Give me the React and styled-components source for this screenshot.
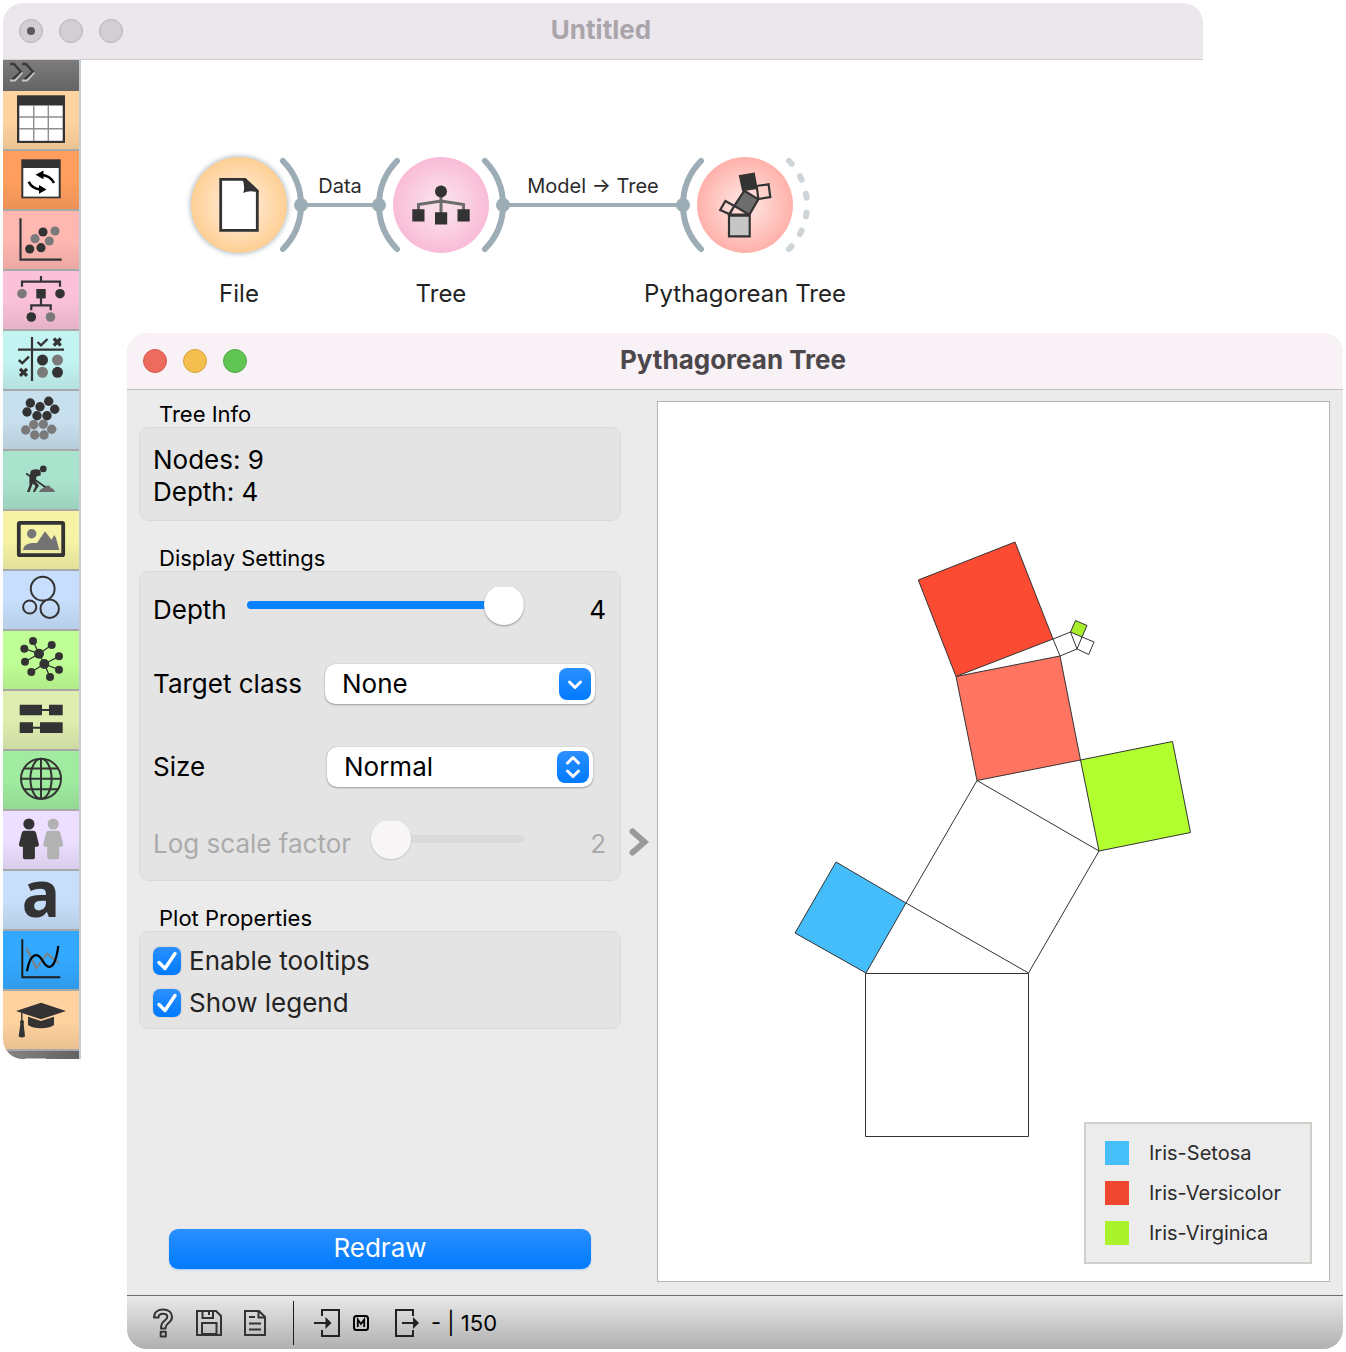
import React, { useState } from "react";
import styled, { createGlobalStyle, css } from "styled-components";

const INK = "#333333";
const GREY = "#7a7a7a";
const ANCHOR = "#9cadb6";

const GlobalStyle = createGlobalStyle`
  *, *::before, *::after { box-sizing: border-box; }
  body {
    margin: 0;
    background: #ffffff;
    color: #000000;
    font-family: Inter, "Liberation Sans", sans-serif;
  }
  button, select, input { font: inherit; color: inherit; margin: 0; }
  svg { display: block; }
`;

/* ---------- Desktop and windows ---------- */

const Desktop = styled.div`
  position: relative;
  height: 100vh;
  min-height: 1200px;
  overflow: hidden;
`;

const WorkflowWindow = styled.section`
  position: absolute;
  top: 3px;
  left: 3px;
  right: 143px;
  display: flex;
  flex-direction: column;
  overflow: hidden;
  border-radius: 20px 20px 0 20px;
`;

const DialogWindow = styled.section`
  position: absolute;
  top: 333px;
  left: 127px;
  right: 3px;
  bottom: 3px;
  display: flex;
  flex-direction: column;
  overflow: hidden;
  border-radius: 20px;
  background: #ebebeb;
`;

const TitleBar = styled.header`
  display: grid;
  grid-template-columns: 1fr auto 1fr;
  align-items: center;
  flex: none;
  height: 57px;
  padding: 0 20px 0 16px;
  background: ${(p) => (p.$active ? "#f8f1f6" : "#ece7ec")};
  color: ${(p) => (p.$active ? "#4b474b" : "#aaa5aa")};
  border-bottom: 1px solid ${(p) => (p.$active ? "#c3bfc2" : "#d2ced2")};
`;

const Title = styled.h1`
  margin: 0;
  padding-bottom: 2px;
  font-size: 26px;
  line-height: 32px;
  font-weight: 700;
`;

const Lights = styled.div`
  display: flex;
  gap: 16px;
`;

const Light = styled.button`
  display: grid;
  place-items: center;
  width: 24px;
  height: 24px;
  padding: 0;
  border: 1px solid ${(p) => p.$edge};
  border-radius: 50%;
  background: ${(p) => p.$fill};
`;

const EditedDot = styled.span`
  width: 8px;
  height: 8px;
  border-radius: 50%;
  background: #5d585d;
`;

/* ---------- Category sidebar ---------- */

const Workspace = styled.div`
  display: flex;
`;

const Sidebar = styled.nav`
  display: flex;
  flex-direction: column;
  flex: none;
  width: 78px;
  height: 999px;
  overflow: hidden;
  border-right: 2px solid #c5ccd2;
`;

const ExpandButton = styled.button`
  display: flex;
  align-items: flex-start;
  flex: none;
  height: 31px;
  padding: 2px 0 0 6px;
  border: 0;
  background: linear-gradient(#7c7c7c, #646464);
`;

const Category = styled.button`
  flex: none;
  height: 60px;
  padding: 0;
  border: 0;
  border-bottom: 2px solid #a8a8a8;
  background: linear-gradient(rgba(0, 0, 0, 0) 50%, rgba(0, 0, 0, 0.08)) ${(p) => p.$color};
`;

const Letter = styled.span`
  display: block;
  padding-bottom: 14px;
  font-family: "Noto Sans", sans-serif;
  font-size: 64px;
  line-height: 44px;
  font-weight: 700;
  color: ${INK};
`;

const SidebarEnd = styled.div`
  flex: none;
  height: 8px;
  padding: 7px 0 0 22px;
  background: linear-gradient(90deg, #868686, #626262);

  &::after {
    content: "";
    display: block;
    width: 21px;
    height: 1px;
    background: #bdbdbd;
  }
`;

/* ---------- Workflow canvas ---------- */

const Canvas = styled.main`
  position: relative;
  flex: 1;
  background: #ffffff;
`;

const LinkLine = styled.div`
  position: absolute;
  left: ${(p) => p.$from}px;
  top: 120px;
  display: flex;
  flex-direction: column;
  align-items: center;
  gap: 11px;
  width: ${(p) => p.$to - p.$from}px;
  font-size: 20px;
  line-height: 12px;
  color: #2b2b2b;
  white-space: nowrap;

  &::after {
    content: "";
    width: 100%;
    height: 4px;
    background: ${ANCHOR};
  }
`;

const NodeBox = styled.figure`
  position: absolute;
  left: ${(p) => p.$x - 110}px;
  top: 93px;
  display: flex;
  flex-direction: column;
  align-items: center;
  gap: 21px;
  width: 220px;
  margin: 0;
`;

const NodeName = styled.figcaption`
  font-size: 24px;
  line-height: 32px;
  color: #232323;
  white-space: nowrap;
`;

/* ---------- Dialog body ---------- */

const DialogBody = styled.div`
  display: flex;
  flex: 1;
  min-height: 0;
  padding: 11px 13px 13px 12px;
`;

const Controls = styled.div`
  display: flex;
  flex-direction: column;
  gap: 24px;
  flex: none;
  width: 482px;
`;

const Group = styled.fieldset`
  min-width: 0;
  margin: 0;
  padding: 0;
  border: 0;
`;

const GroupTitle = styled.legend`
  padding: 0 20px;
  font-size: 22px;
  line-height: 26px;
`;

const GroupPanel = styled.div`
  padding: ${(p) => p.$padding};
  border: 1px solid #d9d9d9;
  border-radius: 10px;
  background: #e4e4e4;
  font-size: 26px;
  line-height: 32px;
`;

const InfoLine = styled.p`
  margin: 0;
`;

const SettingsGrid = styled.div`
  display: grid;
  grid-template-rows: 76px 72px 94px 60px;
`;

const SettingRow = styled.div`
  display: flex;
  align-items: center;
  gap: 20px;
  color: ${(p) => (p.$disabled ? "#ababab" : "#000000")};
`;

const SettingLabel = styled.label`
  flex: none;
`;

const SettingValue = styled.output`
  flex: none;
  width: 62px;
  text-align: right;
`;

const thumb = css`
  appearance: none;
  width: 40px;
  height: 40px;
  margin-top: -16px;
  border: 0;
  border-radius: 50%;
  background: ${(p) => (p.disabled ? "#f8f6f7" : "#ffffff")};
  box-shadow: 0 1px 2px rgba(0, 0, 0, ${(p) => (p.disabled ? 0.15 : 0.35)});
`;

const Slider = styled.input`
  appearance: none;
  flex: 1;
  min-width: 0;
  height: 40px;
  margin-bottom: 10px;
  background: transparent;
  clip-path: inset(2px -4px -4px -4px);

  &::-webkit-slider-runnable-track {
    height: 8px;
    border-radius: 4px;
    background: ${(p) => (p.disabled ? "#dadada" : "#0a82ff")};
  }
  &::-webkit-slider-thumb { ${thumb} }
`;

const SelectBox = styled.div`
  display: grid;
  align-items: center;
  width: ${(p) => p.$width}px;
  margin: 0 ${(p) => p.$inset}px 0 auto;
`;

const Select = styled.select`
  grid-area: 1 / 1;
  appearance: none;
  width: 100%;
  height: 40px;
  padding: 0 44px 0 17px;
  border: 0;
  border-radius: 10px;
  background: #ffffff;
  box-shadow: 0 0 1px rgba(0, 0, 0, 0.3), 0 1px 2px rgba(0, 0, 0, 0.3);
`;

const SelectBadge = styled.span`
  grid-area: 1 / 1;
  justify-self: end;
  width: 32px;
  height: 32px;
  margin-right: 4px;
  border-radius: 8px;
  background: linear-gradient(#2b90ff, #007aff);
  pointer-events: none;
`;

const CheckRow = styled.label`
  display: flex;
  align-items: center;
  gap: 8px;
  height: 42px;
  color: #232323;
`;

const CheckCell = styled.span`
  display: grid;
  width: 28px;
  height: 28px;

  > * { grid-area: 1 / 1; }
  > svg { pointer-events: none; }
  > input:not(:checked) + svg { visibility: hidden; }
`;

const CheckInput = styled.input`
  appearance: none;
  width: 28px;
  height: 28px;
  border-radius: 7px;
  background: #ffffff;
  box-shadow: 0 0 2px rgba(0, 0, 0, 0.2);

  &:checked { background: linear-gradient(#2b90ff, #007aff); }
`;

const RedrawButton = styled.button`
  height: 40px;
  margin: auto 30px 13px;
  padding: 0 0 2px;
  border: 0;
  border-radius: 9px;
  background: linear-gradient(#2b90ff, #007aff);
  box-shadow: 0 1px 2px rgba(0, 122, 255, 0.3);
  color: #ffffff;
  font-size: 26px;
  line-height: 32px;
`;

const SplitHandle = styled.button`
  display: grid;
  place-items: center;
  flex: none;
  width: 36px;
  padding: 0;
  border: 0;
  background: transparent;
`;

const Plot = styled.div`
  position: relative;
  flex: 1;
  min-width: 0;
  border: 1px solid #b4b4b4;
  background: #ffffff;
`;

const Legend = styled.ul`
  position: absolute;
  right: 17px;
  bottom: 17px;
  min-width: 228px;
  margin: 0;
  padding: 9px 18px 9px 19px;
  border: 2px solid #cfcfca;
  background: #ececec;
  list-style: none;
`;

const LegendItem = styled.li`
  display: flex;
  align-items: center;
  gap: 20px;
  height: 40px;
  font-size: 20px;
  line-height: 24px;
  color: #2b2b2b;

  &::before {
    content: "";
    width: 24px;
    height: 24px;
    background: ${(p) => p.$color};
  }
`;

/* ---------- Status bar ---------- */

const StatusBar = styled.footer`
  display: flex;
  align-items: center;
  flex: none;
  height: 54px;
  padding: 0 24px;
  border-top: 1px solid #6e6e6e;
  background: linear-gradient(#e9e9e9, #b0b0b0);
  font-size: 22px;
  line-height: 28px;
`;

const StatusGroup = styled.div`
  display: flex;
  align-items: center;
  gap: ${(p) => p.$gap}px;
`;

const StatusButton = styled.button`
  padding: 0;
  border: 0;
  background: transparent;
`;

const StatusDivider = styled.span`
  width: 1px;
  height: 44px;
  margin: 0 20px 0 27px;
  background: #1c1c1c;
`;

/* ---------- Category icons, drawn on a 76 x 58 tile ---------- */

const dots = (list, r, fill) =>
  list.map(([x, y]) => <circle key={`${x},${y}`} cx={x} cy={y} r={r} fill={fill} />);

const Person = ({ x, fill }) => (
  <g transform={`translate(${x} 0)`} fill={fill}>
    <circle cx="0" cy="13" r="5.6" />
    <path d="M-4.5 19.7H4.5Q6.5 19.7 7.2 22L10 33.5Q10 35.5 8.5 35.7H6V46.5Q6 48.3 4 48.3H-4Q-6 48.3-6 46.5V35.7H-8.5Q-10 35.5-10 33.5L-7.2 22Q-6.5 19.7-4.5 19.7Z" />
  </g>
);

const categories = [
  ["Data", "#ffd39f", (
    <>
      <rect x="14" y="4.3" width="48" height="47.7" fill={INK} />
      <rect x="16.3" y="14.5" width="43.4" height="35.3" fill="#fff" />
      <path d="M30.7 14.5V50M45.3 14.5V50M16 26H60M16 37.7H60" stroke="#8f8f8f" strokeWidth="1.4" />
    </>
  )],
  ["Transform", "#ff9e5e", (
    <>
      <rect x="18.3" y="8.3" width="39.4" height="39" fill={INK} />
      <rect x="20.3" y="17" width="35.4" height="28.6" fill="#fff" />
      <path d="M51 32Q47 24.5 39 24M25.7 30.7Q29 37.5 37 38.4" fill="none" stroke="#000" strokeWidth="2.6" />
      <path d="M32.5 23.7L40.5 19.5V28.2ZM43.5 38.4L36 34V42.8Z" fill="#000" />
    </>
  )],
  ["Visualize", "#ffb7b1", (
    <>
      <path d="M17.5 7.3V48.7H58.7" fill="none" stroke={INK} strokeWidth="2.2" />
      {dots([[52, 20], [32, 27.7], [46.3, 30]], 4.6, GREY)}
      {dots([[40, 21], [26.7, 38], [38, 36.7]], 4.6, INK)}
    </>
  )],
  ["Model", "#fac1d9", (
    <>
      <path d="M19 15.7V10.7H57V15.7M38 5V10.7M38 27V34.3M28.3 39.3V34.3H47.7V39.3" fill="none" stroke={INK} strokeWidth="2.2" />
      <rect x="33.3" y="18" width="9.4" height="9.4" fill={INK} />
      {dots([[57, 22.7], [28.3, 46]], 4.8, INK)}
      {dots([[19, 22.7], [47.5, 46]], 4.8, GREY)}
    </>
  )],
  ["Evaluate", "#c4f4f2", (
    <>
      <path d="M29 6V50M15 18.7H61" stroke={INK} strokeWidth="2.2" />
      <path d="M34.5 11L38 14.3L44.5 8M15.7 29L19.3 32.2L26 25.7" fill="none" stroke={INK} strokeWidth="2.4" />
      <path d="M50.8 7.5L57.8 14.5M57.8 7.5L50.8 14.5M17 37.8L24 44.8M24 37.8L17 44.8" stroke={INK} strokeWidth="3.2" />
      {dots([[39.5, 29], [54.5, 41.3]], 5.5, INK)}
      {dots([[54.5, 29], [39.5, 41.3]], 5.5, GREY)}
    </>
  )],
  ["Unsupervised", "#c8dfee", (
    <>
      {dots([[30.7, 33.7], [40.3, 33.3], [22.7, 39], [48.7, 38.3], [31.7, 44], [41, 44]], 4.7, GREY)}
      {dots([[27.3, 12], [37, 15.7], [45.7, 10.3], [24, 21], [51.7, 18.3], [34, 24.7], [44, 24.7]], 4.7, INK)}
    </>
  )],
  ["Prototypes", "#aae3cd", (
    <>
      <path d="M36 41Q37.5 37.5 40.5 37Q41.5 34.5 44.5 34.5Q47.5 34.5 48 37Q51 37.5 52 41Z" fill="#6b6b6b" />
      <circle cx="40.3" cy="17.9" r="3.3" fill={INK} />
      <path d="M28 19.5Q32 17.5 36.5 18.8Q38.5 20.5 37.5 24.5L33.5 25.5L32.5 30.5L36 34.5L31.8 41H29.8L32.5 35L29.8 32.5L26.5 41H24L26.5 34Q25.8 25 28 19.5Z" fill={INK} />
      <path d="M23.2 22.5L42.5 36.2" stroke={INK} strokeWidth="1.7" />
    </>
  )],
  ["Image Analytics", "#f6f3a6", (
    <>
      <rect x="15.8" y="11.8" width="44.4" height="32.4" rx="1" fill="none" stroke={INK} strokeWidth="3.8" />
      <circle cx="28.7" cy="22.8" r="4.7" fill="#777" />
      <path d="M20 39Q21 32.5 29 32H34L42 20.2L48.5 28.8L51.3 24L53 27L56.3 39Z" fill="#737373" />
    </>
  )],
  ["Networks", "#c7dffc", (
    <g fill="none" stroke={INK} strokeWidth="2">
      <circle cx="39.7" cy="17.7" r="11.9" />
      <circle cx="26.7" cy="36" r="6.6" />
      <circle cx="46.7" cy="37.7" r="9.2" />
    </g>
  )],
  ["Network", "#c0ff96", (
    <>
      <path d="M36 22.7L30 10M36 22.7L48.7 14M36 22.7L21.3 17.7M36 22.7L22 30.7M36 22.7L41.3 33M41.3 33L56 25.3M41.3 33L56 38.7M41.3 33L28.3 41M41.3 33L47 46" stroke={INK} strokeWidth="1.3" />
      {dots([[36, 22.7], [41.3, 33]], 5, INK)}
      {dots([[30, 10], [48.7, 14], [21.3, 17.7], [56, 25.3], [22, 30.7], [56, 38.7], [28.3, 41], [47, 46]], 4, INK)}
    </>
  )],
  ["Time blocks", "#dfedb0", (
    <path d="M16.7 13.7H39V18H46V13.7H59.7V24.3H46V20H39V24.3H16.7ZM16.7 31.3H30V35.7H37V31.3H59.7V42H37V37.7H30V42H16.7Z" fill={INK} />
  )],
  ["Geo", "#a0eba0", (
    <g fill="none" stroke={INK} strokeWidth="2">
      <circle cx="38" cy="27.8" r="20" />
      <ellipse cx="38" cy="27.8" rx="10.6" ry="20" />
      <path d="M38 8V48M18 27.8H58M21 17.6H55M21 38.2H55" />
    </g>
  )],
  ["Fairness", "#ecdfff", (
    <>
      <Person x={25.9} fill={INK} />
      <Person x={50.2} fill="#b2b2b2" />
    </>
  )],
  ["Text Mining", "#c7dffa", "a"],
  ["Time Series", "#33a8ff", (
    <g fill="none">
      <path d="M23.3 17L33.3 37L44 22.7L56 32.3" stroke="#7f7f7f" strokeWidth="2" />
      <path d="M19.3 8.3V46.3H57.3" stroke="#1d1d1d" strokeWidth="2" />
      <path d="M24 40.3C27 22 34.5 20.5 39.5 29.5C44 37.5 51.5 42.5 55.3 15" stroke="#000" strokeWidth="2.2" />
    </g>
  )],
  ["Educational", "#ffd29f", (
    <>
      <path d="M13 20L38 11.7L63 20L38 28.3Z" fill={INK} />
      <path d="M25 25.7L38 30L51 25.7V34Q46 37.2 38 37.2Q30 37.2 25 34Z" fill={INK} />
      <path d="M18.8 21.5V31" stroke={INK} strokeWidth="1.4" />
      <circle cx="19" cy="31" r="2" fill={INK} />
      <path d="M17.5 31.5H20.5L22 45.5Q19 47.5 15.7 45.5Z" fill={INK} />
    </>
  )],
];

/* ---------- Workflow nodes ---------- */

const RIGHT_ARC = "M44 -44A62.8 62.8 0 0 1 44 44";
const LEFT_ARC = "M-44 -44A62.8 62.8 0 0 0 -44 44";

function WorkflowNode({ x, name, id, inner, outer, input, output, selected, children }) {
  return (
    <NodeBox $x={x}>
      <svg width="140" height="104" viewBox="-70 -52 140 104" overflow="visible" aria-hidden="true">
        <defs>
          <radialGradient id={id}>
            <stop offset="0.3" stopColor={inner} />
            <stop offset="1" stopColor={outer} />
          </radialGradient>
          <filter id={`${id}-glow`} x="-20%" y="-20%" width="140%" height="140%">
            <feGaussianBlur stdDeviation="2.5" />
          </filter>
        </defs>
        {selected && <circle r="49" fill={ANCHOR} filter={`url(#${id}-glow)`} opacity="0.8" />}
        <circle r="48" fill={`url(#${id})`} />
        <g fill="none" stroke={ANCHOR} strokeWidth="6" strokeLinecap="round">
          {input && <path d={LEFT_ARC} />}
          {output === "linked" && <path d={RIGHT_ARC} />}
          {output === "free" && <path d={RIGHT_ARC} stroke="#cdd5d9" strokeDasharray="4 14.7" />}
        </g>
        {input && <circle cx="-62" r="7" fill={ANCHOR} />}
        {output === "linked" && <circle cx="62" r="7" fill={ANCHOR} />}
        {children}
      </svg>
      <NodeName>{name}</NodeName>
    </NodeBox>
  );
}

/* ---------- Pythagorean tree ---------- */

const squares = [
  ["865.5,973.5 1028.5,973.5 1028.5,1136.5 865.5,1136.5", "none"],
  ["866,973 906,903 836,862 795,933", "#46bdfb"],
  ["906,903 977,780.5 1099,851 1028.5,973", "none"],
  ["977,780.5 956,676.5 1060,656 1080.5,760", "#ff7562"],
  ["1080.5,760 1172.5,741.5 1190.5,832.5 1099,851", "#b2ff2f"],
  ["956,676.5 918.3,580 1015,542 1053,639", "#fb4b32"],
  ["1053,639 1070.5,632 1077,649 1060,656", "none"],
  ["1070.5,632 1075.5,620.5 1087,625.5 1082,637", "#a8ee2c"],
  ["1077,649 1082,637 1094,642 1088.7,654.5", "none"],
];

function Chevron({ double }) {
  return (
    <svg width="32" height="32" viewBox="0 0 32 32" aria-hidden="true" fill="none" stroke="#fff" strokeWidth="3" strokeLinecap="round" strokeLinejoin="round">
      <path d={double ? "M10.5 12L16 6.5L21.5 12M10.5 20L16 25.5L21.5 20" : "M10.5 14L16 19.5L21.5 14"} />
    </svg>
  );
}

function Check({ label, defaultChecked }) {
  return (
    <CheckRow>
      <CheckCell>
        <CheckInput type="checkbox" defaultChecked={defaultChecked} />
        <svg width="28" height="28" viewBox="0 0 28 28" aria-hidden="true">
          <path d="M6 15.5L12 21.5L22 6.5" fill="none" stroke="#fff" strokeWidth="3.4" strokeLinecap="round" strokeLinejoin="round" />
        </svg>
      </CheckCell>
      {label}
    </CheckRow>
  );
}

export default function App() {
  const [depth, setDepth] = useState(4);

  return (
    <Desktop>
      <GlobalStyle />
      <WorkflowWindow>
        <TitleBar>
          <Lights>
            <Light aria-label="Close" $fill="#d3ced3" $edge="#b6b1b6"><EditedDot /></Light>
            <Light aria-label="Minimize" $fill="#d3ced3" $edge="#b6b1b6" />
            <Light aria-label="Zoom" $fill="#d3ced3" $edge="#b6b1b6" />
          </Lights>
          <Title>Untitled</Title>
        </TitleBar>
        <Workspace>
          <Sidebar aria-label="Widget categories">
            <ExpandButton aria-label="Expand">
              <svg width="28" height="20" viewBox="0 0 28 20" fill="none" strokeWidth="2.4">
                <path d="M1 2H5L12 10L3 18M13 2H17L24 10L15 18" stroke="#3a3a3a" />
                <path d="M1 18.5H6L13.5 10.5M13 18.5H18L25.5 10.5" stroke="#c8c8c8" strokeWidth="1.8" />
              </svg>
            </ExpandButton>
            {categories.map(([name, color, icon]) => (
              <Category key={name} aria-label={name} $color={color}>
                {typeof icon === "string" ? (
                  <Letter>{icon}</Letter>
                ) : (
                  <svg width="76" height="58" viewBox="0 0 76 58" aria-hidden="true">{icon}</svg>
                )}
              </Category>
            ))}
            <SidebarEnd />
          </Sidebar>
          <Canvas>
            <LinkLine $from={220} $to={298}>Data</LinkLine>
            <LinkLine $from={422} $to={602}>Model → Tree</LinkLine>
            <WorkflowNode x={158} name="File" id="file" inner="#ffe7cc" outer="#ffcf94" output="linked" selected>
              <path d="M-18.3 -25.6H6L18.3 -14V25.3H-18.3Z" fill="#fff" stroke={INK} strokeWidth="2.8" />
              <path d="M3 -26.5H6.5L19.5 -14.5V-12.5Q10 -15 4.3 -12Q6.5 -19 3 -26.5Z" fill={INK} />
            </WorkflowNode>
            <WorkflowNode x={360} name="Tree" id="tree" inner="#fadbe8" outer="#fabbd7" input output="linked">
              <path d="M-22.5 6V-0.5L0 -4L22.5 -0.5V6M0 -8V9" fill="none" stroke="#6b6b6b" strokeWidth="3" />
              <circle cy="-13.6" r="6" fill={INK} />
              <path d="M-28.7 4.3H-16.5V16.5H-28.7ZM-6 7.3H6.2V19.5H-6ZM16.5 4.3H28.7V16.5H16.5Z" fill={INK} />
            </WorkflowNode>
            <WorkflowNode x={664} name="Pythagorean Tree" id="pyth" inner="#ffd9d5" outer="#ffb1aa" input output="free">
              <g stroke={INK} strokeWidth="2.2">
                <path d="M-16 10.6H4.7V31.4H-16Z" fill="#c6c6c6" />
                <path d="M-0.7 -14.3L13.3 -5.7L4.3 9.7L-10.7 1Z" fill="#6e6e6e" />
                <path d="M-5 -29L8.8 -31.2L11.5 -17L-2 -15Z" fill={INK} />
                <path d="M11.7 -19L23.6 -20.7L25.3 -8L13.3 -6ZM-19.6 -4L-10.7 1L-15.8 9L-24.8 4.9ZM-10.7 1L-15.5 9.7H4" fill="none" />
              </g>
            </WorkflowNode>
          </Canvas>
        </Workspace>
      </WorkflowWindow>

      <DialogWindow>
        <TitleBar $active>
          <Lights>
            <Light aria-label="Close" $fill="#ec6a5e" $edge="#d5574c" />
            <Light aria-label="Minimize" $fill="#f4bf4f" $edge="#d9a13c" />
            <Light aria-label="Zoom" $fill="#61c554" $edge="#50a845" />
          </Lights>
          <Title>Pythagorean Tree</Title>
        </TitleBar>
        <DialogBody>
          <Controls>
            <Group>
              <GroupTitle>Tree Info</GroupTitle>
              <GroupPanel $padding="16px 13px 12px">
                <InfoLine>Nodes: 9</InfoLine>
                <InfoLine>Depth: 4</InfoLine>
              </GroupPanel>
            </Group>
            <Group>
              <GroupTitle>Display Settings</GroupTitle>
              <GroupPanel $padding="0 14px 6px 13px">
                <SettingsGrid>
                  <SettingRow>
                    <SettingLabel htmlFor="depth">Depth</SettingLabel>
                    <Slider id="depth" type="range" min="0" max="4" value={depth} onChange={(e) => setDepth(e.target.value)} />
                    <SettingValue htmlFor="depth">{depth}</SettingValue>
                  </SettingRow>
                  <SettingRow>
                    <SettingLabel htmlFor="target">Target class</SettingLabel>
                    <SelectBox $width={270} $inset={11}>
                      <Select id="target"><option>None</option></Select>
                      <SelectBadge><Chevron /></SelectBadge>
                    </SelectBox>
                  </SettingRow>
                  <SettingRow>
                    <SettingLabel htmlFor="size">Size</SettingLabel>
                    <SelectBox $width={266} $inset={13}>
                      <Select id="size"><option>Normal</option></Select>
                      <SelectBadge><Chevron double /></SelectBadge>
                    </SelectBox>
                  </SettingRow>
                  <SettingRow $disabled>
                    <SettingLabel htmlFor="log">Log scale factor</SettingLabel>
                    <Slider id="log" type="range" min="2" max="10" defaultValue="2" disabled />
                    <SettingValue htmlFor="log">2</SettingValue>
                  </SettingRow>
                </SettingsGrid>
              </GroupPanel>
            </Group>
            <Group>
              <GroupTitle>Plot Properties</GroupTitle>
              <GroupPanel $padding="8px 13px 4px">
                <Check label="Enable tooltips" defaultChecked />
                <Check label="Show legend" defaultChecked />
              </GroupPanel>
            </Group>
            <RedrawButton>Redraw</RedrawButton>
          </Controls>
          <SplitHandle aria-label="Toggle controls">
            <svg width="20" height="28" viewBox="0 0 20 28" aria-hidden="true">
              <path d="M3.5 3.5L15.5 14L3.5 24.5" fill="none" stroke="#9a9a9a" strokeWidth="6" strokeLinecap="round" strokeLinejoin="miter" />
            </svg>
          </SplitHandle>
          <Plot>
            <svg width="100%" height="100%" viewBox="658 402 671 879" role="img" aria-label="Pythagorean tree of the Iris classes">
              <g stroke="#333" strokeWidth="1">
                {squares.map(([points, fill]) => (
                  <polygon key={points} points={points} fill={fill} />
                ))}
              </g>
            </svg>
            <Legend>
              <LegendItem $color="#46befa">Iris-Setosa</LegendItem>
              <LegendItem $color="#ef4630">Iris-Versicolor</LegendItem>
              <LegendItem $color="#aaf22c">Iris-Virginica</LegendItem>
            </Legend>
          </Plot>
        </DialogBody>
        <StatusBar>
          <StatusGroup $gap={22}>
            <StatusButton aria-label="Help">
              <svg width="23" height="30" viewBox="0 0 23 30" fill="none" stroke={INK} strokeWidth="2" strokeLinejoin="round">
                <path d="M3 9.5C3 4 7 1.5 12 1.5C17.5 1.5 21 4.5 21 9C21 12.5 19 14 17 15.5C15 17 14.5 17.5 14.5 20.5H10C10 16 11 14.5 13.5 12.7C15.5 11.3 16.3 10.5 16.3 9C16.3 7 14.5 5.8 12 5.8C9.3 5.8 7.6 7 7.5 9.5Z" />
                <path d="M9.7 23.7H14.8V28.5H9.7Z" />
              </svg>
            </StatusButton>
            <StatusButton aria-label="Save">
              <svg width="26" height="28" viewBox="0 0 26 28" fill="none" stroke={INK} strokeWidth="2">
                <path d="M1 2H20L25 7V26H1ZM6.5 2V9H17V2M13 2V6M6 26V14H20.5V26M6 25H20" />
              </svg>
            </StatusButton>
            <StatusButton aria-label="Report">
              <svg width="22" height="28" viewBox="0 0 22 28" fill="none" stroke={INK} strokeWidth="2">
                <path d="M1 2H15L21 8V26H1ZM14.5 2V8.5H21M5 8H11M5 14.5H17M5 20.5H17" />
              </svg>
            </StatusButton>
          </StatusGroup>
          <StatusDivider />
          <StatusGroup $gap={12}>
            <svg width="27" height="28" viewBox="0 0 27 28" role="img" aria-label="Input">
              <path d="M8 7V1H25V27H8V21M0 14H13" fill="none" stroke="#222" strokeWidth="2" />
              <path d="M11.5 8L17.5 14L11.5 20Z" fill="#222" />
            </svg>
            <svg width="16" height="16" viewBox="0 0 16 16" role="img" aria-label="Model">
              <rect x="1" y="1" width="14" height="14" rx="2.5" fill="none" stroke="#000" strokeWidth="2" />
              <path d="M4.8 12V4.5L8 9L11.2 4.5V12" fill="none" stroke="#000" strokeWidth="1.8" />
            </svg>
            <svg width="38" height="28" viewBox="-14 0 38 28" role="img" aria-label="Output">
              <path d="M18 7V1H1V27H18V21M7 14H20" fill="none" stroke="#222" strokeWidth="2" />
              <path d="M18 8L24 14L18 20Z" fill="#222" />
            </svg>
            <span>- | 150</span>
          </StatusGroup>
        </StatusBar>
      </DialogWindow>
    </Desktop>
  );
}
